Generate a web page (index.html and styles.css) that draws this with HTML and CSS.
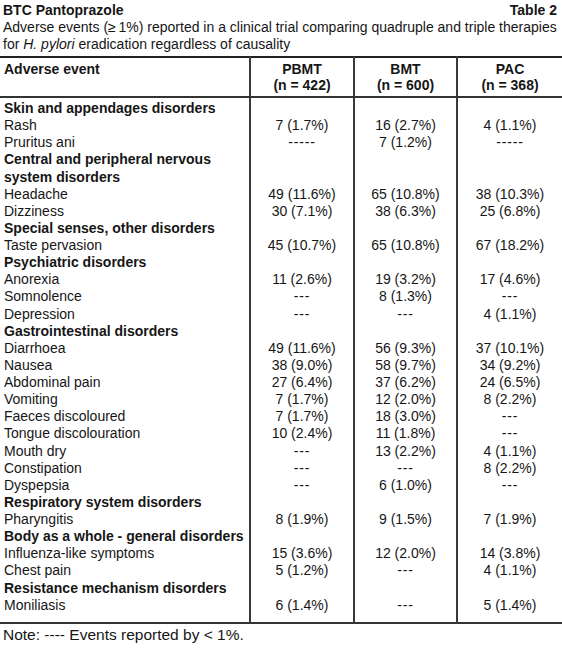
FILE: index.html
```html
<!DOCTYPE html>
<html lang="en">
<head>
<meta charset="utf-8">
<title>BTC Pantoprazole – Table 2</title>
<link rel="stylesheet" href="styles.css">
</head>
<body>
<div class="sheet">
  <div class="caption">
    <div class="caption-head">
      <span class="caption-title">BTC Pantoprazole</span>
      <span class="caption-no">Table 2</span>
    </div>
    <p class="caption-text">
      <span class="line">Adverse events (≥&#8201;1%) reported in a clinical trial comparing quadruple and triple therapies</span>
      <span class="line">for <i>H. pylori</i> eradication regardless of causality</span>
    </p>
  </div>
  <table class="ae">
    <colgroup>
      <col class="c-label"><col class="c-pbmt"><col class="c-bmt"><col class="c-pac">
    </colgroup>
    <thead>
      <tr><th class="label">Adverse event</th><th>PBMT<br>(n = 422)</th><th>BMT<br>(n = 600)</th><th>PAC<br>(n = 368)</th></tr>
    </thead>
    <tbody>
      <tr class="cat"><td class="label">Skin and appendages disorders</td><td></td><td></td><td></td></tr>
      <tr><td class="label">Rash</td><td>7 (1.7%)</td><td>16 (2.7%)</td><td>4 (1.1%)</td></tr>
      <tr><td class="label">Pruritus ani</td><td class="dash">-----</td><td>7 (1.2%)</td><td class="dash">-----</td></tr>
      <tr class="cat"><td class="label">Central and peripheral nervous<br>system disorders</td><td></td><td></td><td></td></tr>
      <tr><td class="label">Headache</td><td>49 (11.6%)</td><td>65 (10.8%)</td><td>38 (10.3%)</td></tr>
      <tr><td class="label">Dizziness</td><td>30 (7.1%)</td><td>38 (6.3%)</td><td>25 (6.8%)</td></tr>
      <tr class="cat"><td class="label">Special senses, other disorders</td><td></td><td></td><td></td></tr>
      <tr><td class="label">Taste pervasion</td><td>45 (10.7%)</td><td>65 (10.8%)</td><td>67 (18.2%)</td></tr>
      <tr class="cat"><td class="label">Psychiatric disorders</td><td></td><td></td><td></td></tr>
      <tr><td class="label">Anorexia</td><td>11 (2.6%)</td><td>19 (3.2%)</td><td>17 (4.6%)</td></tr>
      <tr><td class="label">Somnolence</td><td class="dash">---</td><td>8 (1.3%)</td><td class="dash">---</td></tr>
      <tr><td class="label">Depression</td><td class="dash">---</td><td class="dash">---</td><td>4 (1.1%)</td></tr>
      <tr class="cat"><td class="label">Gastrointestinal disorders</td><td></td><td></td><td></td></tr>
      <tr><td class="label">Diarrhoea</td><td>49 (11.6%)</td><td>56 (9.3%)</td><td>37 (10.1%)</td></tr>
      <tr><td class="label">Nausea</td><td>38 (9.0%)</td><td>58 (9.7%)</td><td>34 (9.2%)</td></tr>
      <tr><td class="label">Abdominal pain</td><td>27 (6.4%)</td><td>37 (6.2%)</td><td>24 (6.5%)</td></tr>
      <tr><td class="label">Vomiting</td><td>7 (1.7%)</td><td>12 (2.0%)</td><td>8 (2.2%)</td></tr>
      <tr><td class="label">Faeces discoloured</td><td>7 (1.7%)</td><td>18 (3.0%)</td><td class="dash">---</td></tr>
      <tr><td class="label">Tongue discolouration</td><td>10 (2.4%)</td><td>11 (1.8%)</td><td class="dash">---</td></tr>
      <tr><td class="label">Mouth dry</td><td class="dash">---</td><td>13 (2.2%)</td><td>4 (1.1%)</td></tr>
      <tr><td class="label">Constipation</td><td class="dash">---</td><td class="dash">---</td><td>8 (2.2%)</td></tr>
      <tr><td class="label">Dyspepsia</td><td class="dash">---</td><td>6 (1.0%)</td><td class="dash">---</td></tr>
      <tr class="cat"><td class="label">Respiratory system disorders</td><td></td><td></td><td></td></tr>
      <tr><td class="label">Pharyngitis</td><td>8 (1.9%)</td><td>9 (1.5%)</td><td>7 (1.9%)</td></tr>
      <tr class="cat"><td class="label">Body as a whole - general disorders</td><td></td><td></td><td></td></tr>
      <tr><td class="label">Influenza-like symptoms</td><td>15 (3.6%)</td><td>12 (2.0%)</td><td>14 (3.8%)</td></tr>
      <tr><td class="label">Chest pain</td><td>5 (1.2%)</td><td class="dash">---</td><td>4 (1.1%)</td></tr>
      <tr class="cat"><td class="label">Resistance mechanism disorders</td><td></td><td></td><td></td></tr>
      <tr><td class="label">Moniliasis</td><td>6 (1.4%)</td><td class="dash">---</td><td>5 (1.4%)</td></tr>
    </tbody>
  </table>
  <p class="note">Note: ---- Events reported by &lt; 1%.</p>
</div>
</body>
</html>
```

FILE: styles.css
```css
body {
  margin: 0;
  background: #ffffff;
  color: #161616;
  font-family: "Liberation Sans", Arial, sans-serif;
  font-size: 14px;
}

.sheet {
  width: 562px;
}

.caption {
  padding: 2px 5px 0 3px;
  line-height: 17px;
}

.caption-head {
  display: flex;
  justify-content: space-between;
  font-weight: bold;
}

.caption-text {
  margin: 0;
}

.line {
  display: block;
  white-space: nowrap;
}

.ae {
  width: 562px;
  margin-top: 3px;
  border-collapse: collapse;
  table-layout: fixed;
  border-top: 2px solid #222;
  border-bottom: 2px solid #333;
}

.c-label { width: 250px; }
.c-pbmt { width: 104px; }
.c-bmt { width: 103px; }
.c-pac { width: 105px; }

.ae th,
.ae td {
  padding: 0;
  line-height: 17.13px;
  text-align: center;
  vertical-align: baseline;
  white-space: nowrap;
}

.ae th {
  line-height: 16px;
  padding: 3px 0;
  font-weight: bold;
  border-bottom: 2px solid #333;
}

.ae .label {
  text-align: left;
  padding-left: 4px;
}

.ae th + th,
.ae td + td {
  border-left: 2px solid #3a3a3a;
}

.ae .dash {
  letter-spacing: 0.8px;
}

.ae tbody tr:first-child td {
  padding-top: 2px;
}

.ae tbody tr:last-child td {
  padding-bottom: 8px;
}

.cat .label {
  font-weight: bold;
}

.note {
  margin: 2px 0 0 3px;
  font-size: 15.5px;
  line-height: 18px;
}
```
